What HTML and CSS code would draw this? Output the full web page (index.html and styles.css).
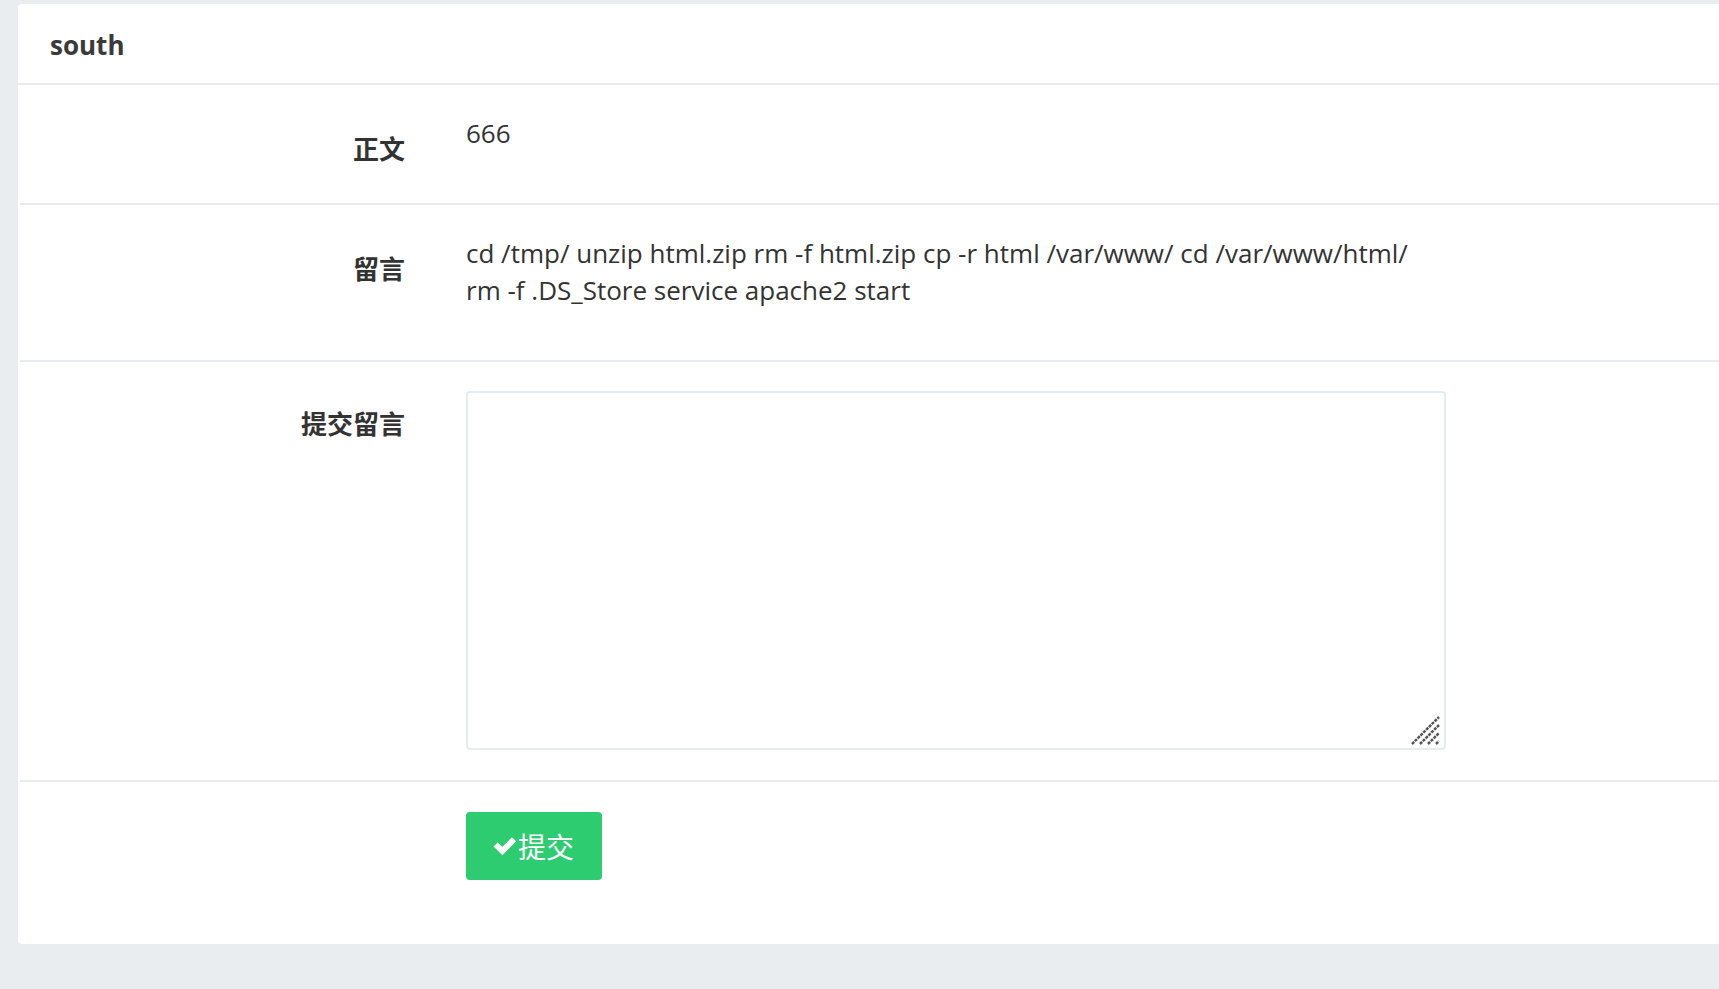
FILE: index.html
```html
<!DOCTYPE html>
<html lang="zh">
<head>
<meta charset="utf-8">
<title>south</title>
<link rel="stylesheet" href="styles.css">
</head>
<body>
<div class="page">
  <div class="card">
    <div class="card-header">south</div>
    <div class="card-body">
      <div class="row row-text">
        <div class="label">正文</div>
        <div class="value"><p class="text">666</p></div>
      </div>
      <div class="row row-text">
        <div class="label">留言</div>
        <div class="value"><p class="text">cd /tmp/ unzip html.zip rm -f html.zip cp -r html /var/www/ cd /var/www/html/ rm -f .DS_Store service apache2 start</p></div>
      </div>
      <div class="row row-area">
        <div class="label">提交留言</div>
        <div class="value">
          <div class="area-wrap">
            <textarea class="area"></textarea>
            <svg class="grip" width="30" height="30" viewBox="0 0 30 30">
              <line x1="1" y1="29" x2="28" y2="2" />
              <line x1="9" y1="29" x2="28" y2="10" />
              <line x1="17" y1="29" x2="28" y2="18" />
              <line x1="25" y1="29" x2="28" y2="26" />
            </svg>
          </div>
        </div>
      </div>
      <div class="row row-btn">
        <div class="label"></div>
        <div class="value">
          <button class="btn" type="button"><svg class="check" width="26" height="22" viewBox="0 0 24 20"><path d="M1.5 10.5 L5.2 6.8 L9.5 11 L18.5 2 L22.3 5.7 L9.5 18.5 Z" fill="#fff"/></svg>提交</button>
        </div>
      </div>
    </div>
  </div>
</div>
</body>
</html>
```

FILE: styles.css
```css
html, body {
  margin: 0;
  padding: 0;
  background: #e9edf0;
}
body {
  font-family: "Open Sans", "Noto Sans CJK SC", sans-serif;
  color: #333;
  font-size: 26px;
  line-height: 37px;
}
.page {
  padding: 4px 0 45px 18px;
  overflow: hidden;
}
.card {
  background: #fff;
  border-radius: 4px 0 0 4px;
  padding: 0 0 35px 2px;
}
.card-header {
  height: 81px;
  box-sizing: border-box;
  padding: 23px 0 0 32px;
  margin-left: -2px;
  font-weight: 700;
  font-size: 26px;
  line-height: 37px;
  color: #3a3a3a;
  border-bottom: 2px solid #e8ecf1;
}
.row {
  display: grid;
  grid-template-columns: 385px 1fr;
  column-gap: 61px;
  padding: 28px 0 29px;
  border-bottom: 2px solid #e8ecf1;
}
.row-text {
  padding-top: 30px;
}
.row-area {
  padding-bottom: 30px;
}
.row-btn {
  border-bottom: none;
}
.label {
  text-align: right;
  font-weight: 700;
  font-family: "Noto Sans CJK SC", sans-serif;
  color: #333;
  padding-top: 14px;
  font-size: 26px;
  line-height: 37px;
}
.text {
  margin: 0 0 22px;
  max-width: 960px;
  color: #333;
}
.area-wrap {
  position: relative;
  width: 980px;
  height: 359px;
  margin-top: 1px;
}
.area {
  display: block;
  width: 100%;
  height: 100%;
  box-sizing: border-box;
  border: 2px solid #e6ebf0;
  border-radius: 4px;
  resize: none;
  background: #fff;
  outline: none;
}
.grip {
  position: absolute;
  right: 5px;
  bottom: 5px;
}
.grip line {
  stroke: #555;
  stroke-width: 2.5;
  stroke-dasharray: 3 1;
}
.btn {
  display: flex;
  align-items: center;
  height: 68px;
  width: 136px;
  margin-top: 2px;
  padding: 0 0 0 26px;
  border: none;
  border-radius: 4px;
  background: #2ecc71;
  color: #fff;
  font-family: "Noto Sans CJK SC", sans-serif;
  font-size: 28px;
  cursor: pointer;
}
.check {
  margin-right: 0;
}
```
